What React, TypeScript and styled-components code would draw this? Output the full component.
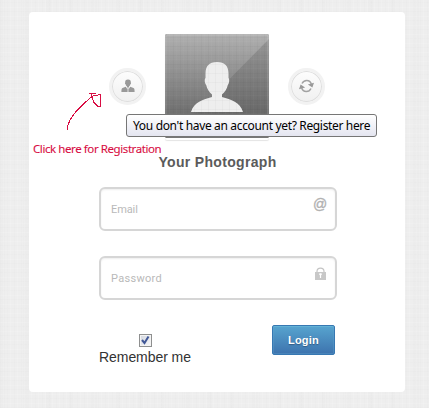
import React from 'react';
import styled, { createGlobalStyle, css } from 'styled-components';

const GlobalStyle = createGlobalStyle`
  * { box-sizing: border-box; }
  html, body { margin: 0; height: 100%; overflow: hidden; }
  body { font-family: "Liberation Sans", Arial, sans-serif; }
`;

const Page = styled.main`
  height: 408px;
  width: 429px;
  padding: 12px 24px 16px 29px;
  background:
    repeating-linear-gradient(90deg, rgba(0,0,0,.007) 0 1px, transparent 1px 3px, rgba(255,255,255,.12) 3px 4px, transparent 4px 7px),
    repeating-linear-gradient(0deg, rgba(0,0,0,.007) 0 1px, transparent 1px 4px, rgba(255,255,255,.12) 4px 5px, transparent 5px 9px),
    repeating-linear-gradient(90deg, rgba(0,0,0,.006) 0 5px, transparent 5px 23px),
    #eee;
`;

const Card = styled.form`
  position: relative;
  display: flex;
  flex-direction: column;
  width: 376px;
  height: 380px;
  padding: 22px 68px 0 70px;
  border-radius: 4px;
  background: #fff;
`;

const ProfileRow = styled.div`
  display: flex;
  justify-content: space-between;
  align-items: center;
  height: 104px;
  margin: 0 12px 0 10px;
`;

const RoundButton = styled.button`
  display: flex;
  align-items: center;
  justify-content: center;
  flex: none;
  width: 37px;
  height: 37px;
  padding: 0;
  border: 3px solid #f2f2f2;
  border-radius: 50%;
  background: linear-gradient(#fdfdfd, #f0f0f0) padding-box;
  box-shadow: inset 0 0 0 1px #dedede;
`;

const Photo = styled.div`
  width: 104px;
  height: 104px;
  border-radius: 2px;
  box-shadow: 0 2px 0 #fff, 0 3px 1px #e4e4e4;
  svg { display: block; border-radius: 2px; }
`;

const Title = styled.h1`
  margin: 14px 0 17px;
  height: 18px;
  font-size: 14px;
  line-height: 20px;
  letter-spacing: .33px;
  text-indent: -1px;
  text-align: center;
  white-space: nowrap;
  color: #5b5b5b;
`;

const Field = styled.label`
  display: flex;
  justify-content: space-between;
  width: 238px;
  height: 44px;
  margin: 0 0 25px;
  padding: 7px 7px 0 10px;
  border: 2px solid #d6d6d6;
  border-radius: 6px;
  box-shadow: inset 0 1px 2px #eee;
  svg { flex: none; }
`;

const Input = styled.input<{ $spacing: string }>`
  width: 180px;
  height: 28px;
  padding: 0;
  border: 0;
  outline: 0;
  background: transparent;
  font: 11px/28px Roboto, "Liberation Sans", sans-serif;
  letter-spacing: ${({ $spacing }) => $spacing};
  &::placeholder { color: #b9b9b9; opacity: 1; }
`;

const Actions = styled.div`
  display: flex;
  justify-content: space-between;
  width: 236px;
`;

const Remember = styled.label`
  display: flex;
  flex-direction: column;
  align-items: center;
  padding-top: 9px;
  font-size: 14px;
  line-height: 18px;
  letter-spacing: -.06px;
  color: #333;
  white-space: nowrap;
`;

const CheckBox = styled.span`
  width: 13px;
  height: 13px;
  margin: 0 0 1px 1px;
  border: 1px solid #8e8f8f;
  background: linear-gradient(135deg, #d2d6de, #f8f8fa);
  box-shadow: inset 0 0 0 1px #f4f4f4;
  svg { display: block; }
`;

const LoginButton = styled.button`
  width: 63px;
  height: 30px;
  padding: 0;
  border: 1px solid #3778b2;
  border-radius: 2px;
  background: linear-gradient(#57a4cf, #3d73ae);
  box-shadow: inset 0 1px #63b2d6, inset 0 0 0 1px rgba(100,165,210,.3);
  color: #fff;
  font: bold 11px/28px "Liberation Sans", Arial, sans-serif;
  letter-spacing: .2px;
  text-shadow: 0 1px 1px #345b83;
`;

const floating = css`
  position: absolute;
  white-space: nowrap;
  pointer-events: none;
`;

const Tooltip = styled.div`
  ${floating}
  left: 97px;
  top: 102px;
  width: 251px;
  height: 23px;
  padding-left: 6px;
  border: 1px solid #767676;
  border-radius: 3px;
  background: linear-gradient(#fff, #e4e5f0);
  color: #000;
  font: 12px/22px "Noto Sans", "Open Sans", sans-serif;
  letter-spacing: -.34px;
`;

const Annotation = styled.div`
  ${floating}
  left: 4px;
  top: 128px;
  color: #d80d43;
  font: 11.5px/18px "Noto Sans", "Open Sans", sans-serif;
  letter-spacing: -.42px;
  -webkit-text-stroke: .1px #d80d43;
`;

const Arrow = styled.svg`
  ${floating}
  left: 35px;
  top: 78px;
`;

const Silhouette = () => (
  <svg width="104" height="104" viewBox="0 0 104 104">
    <defs>
      <linearGradient id="shade" x2="0" y2="1">
        <stop stopColor="#989898" /><stop offset=".75" stopColor="#696969" /><stop offset="1" stopColor="#666" />
      </linearGradient>
      <linearGradient id="shine" x2="0" y2="1">
        <stop stopColor="#b0b0b0" /><stop offset="1" stopColor="#6b6b6b" />
      </linearGradient>
      <pattern id="weave" width="7" height="9" patternUnits="userSpaceOnUse">
        <path d="M1.5 0V9M0 3.5H7" stroke="#000" strokeOpacity=".022" />
        <path d="M4.5 0V9M0 7.5H7" stroke="#fff" strokeOpacity=".025" />
      </pattern>
    </defs>
    <path fill="url(#shade)" d="M0 0H104V104H0Z" />
    <path fill="url(#shine)" d="M0 0H104V5L26 84H0Z" />
    <path fill="none" stroke="#fff" strokeOpacity=".1" strokeWidth="2" d="M1 104V1H103V104" />
    <path fill="#eee" d="M52 28C44 28 40.700 32 40.500 39.500V44C39.300 45 39.600 49 41.200 51C42 55 44 58 47 60.500V63C38 65.500 29 68 26 78H78C75 68 66 65.500 57 63V60.500C60 58 62 55 62.800 51C64.400 49 64.700 45 63.500 44V39.500C63.300 32 60 28 52 28Z" />
    <path fill="url(#weave)" d="M0 0H104V104H0Z" />
    <path fill="#777" d="M0 102.500H104V104H0Z" />
  </svg>
);

const PersonIcon = () => (
  <svg width="14" height="14" viewBox="0 0 14 14" fill="#999">
    <path d="M7 .5C4.900 .5 4 1.700 4.200 3.500C3.700 4 4 5 4.600 5.200C4.900 6.400 5.500 7 6 7.400V8L7 9L8 8V7.400C8.500 7 9.100 6.400 9.400 5.200C10 5 10.300 4 9.800 3.500C10 1.700 9.100 .5 7 .5Z" />
    <path d="M4.800 7.700L1.500 9C.6 9.500 .4 10.800 .4 13H6.500V10.500ZM9.200 7.700L12.500 9C13.400 9.500 13.600 10.800 13.600 13H7.500V10.500Z" />
    <path fill="#bbb" d="M7 9L8 10L7.500 13H6.500L6 10Z" />
  </svg>
);

const RefreshIcon = () => (
  <svg width="15" height="14" viewBox="0 0 15 14">
    <path fill="none" stroke="#a2a2a2" strokeWidth="1.5" d="M3 4.500C5 .3 10.800 .3 12.300 5M12 9.500C10 13.700 4.200 13.700 2.700 9" />
    <path fill="#999" d="M8.900 5.500L15 3.700L13.400 8.400ZM6.100 8.500L0 10.300L1.600 5.600Z" />
  </svg>
);

const AtIcon = () => (
  <svg width="16" height="18" viewBox="0 0 16 18">
    <text x="1" y="13" fontFamily="Liberation Sans" fontSize="14" fill="#b1b1b1" stroke="#b1b1b1" strokeWidth=".35">@</text>
  </svg>
);

const LockIcon = () => (
  <svg width="15" height="17" viewBox="0 0 15 17">
    <path fill="none" stroke="#c4c4c4" strokeWidth="1.200" d="M4 7V6.500C4 2 11 2 11 6.500V7" />
    <path fill="#c8c8c8" d="M2 7H13V15H2Z" />
    <path fill="#fff" d="M6 9.200C6 8 9 8 9 9.200L8.100 10.300V13H6.900V10.300Z" />
  </svg>
);

export default function App() {
  return (
    <>
      <GlobalStyle />
      <Page>
        <Card onSubmit={(event) => event.preventDefault()}>
          <ProfileRow>
            <RoundButton type="button" aria-label="Register"><PersonIcon /></RoundButton>
            <Photo><Silhouette /></Photo>
            <RoundButton type="button" aria-label="Refresh"><RefreshIcon /></RoundButton>
          </ProfileRow>
          <Title>Your Photograph</Title>
          <Field><Input type="email" placeholder="Email" $spacing="-.1px" /><AtIcon /></Field>
          <Field><Input type="password" placeholder="Password" $spacing=".3px" /><LockIcon /></Field>
          <Actions>
            <Remember>
              <CheckBox role="checkbox" aria-checked="true">
                <svg width="11" height="11" viewBox="0 0 11 11">
                  <path fill="none" stroke="#405796" strokeWidth="2" d="M2 5L4.500 8L8.500 1.500" />
                </svg>
              </CheckBox>
              Remember me
            </Remember>
            <LoginButton>Login</LoginButton>
          </Actions>
          <Annotation>Click here for Registration</Annotation>
          <Arrow width="42" height="42" viewBox="0 0 42 42" fill="none" stroke="#d80d43" shapeRendering="crispEdges">
            <path d="M3.500 40V36C7 25 15 18 25 9L29 6L37 4.500M25 3.500H32M27.500 4L29.500 12L34 16.500H36.500V5" />
          </Arrow>
          <Tooltip role="tooltip">You don't have an account yet? Register here</Tooltip>
        </Card>
      </Page>
    </>
  );
}
